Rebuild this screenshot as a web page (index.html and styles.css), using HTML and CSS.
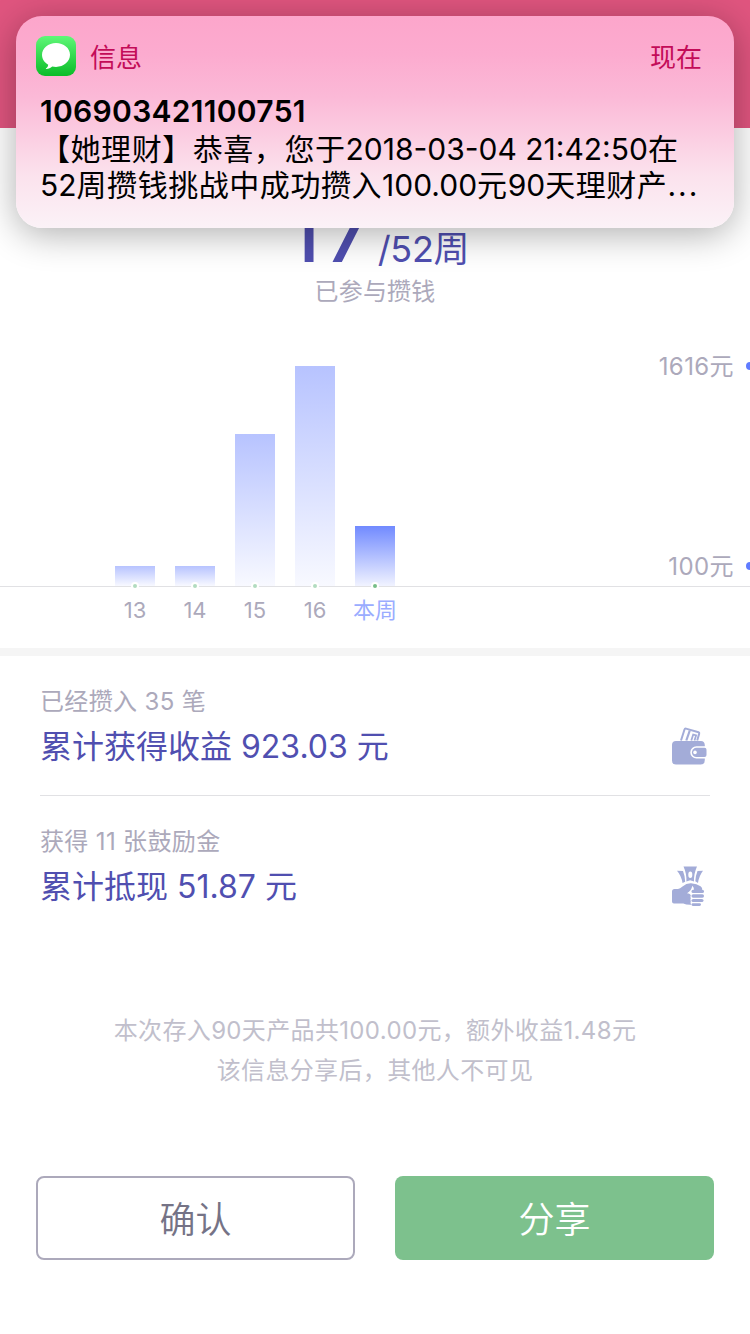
FILE: index.html
```
<!DOCTYPE html>
<html lang="zh-CN">
<head>
    <meta charset="UTF-8">
    <meta name="viewport" content="width=device-width, initial-scale=1.0">
    <title>52周攒钱挑战</title>
    <link rel="stylesheet" href="styles.css">
</head>
<body>
    <!-- 短信通知 -->
    <div class="notice">
        <div class="notice-head">
            <svg class="app-icon" viewBox="0 0 40 40">
                <defs>
                    <linearGradient id="msgGreen" x1="0" y1="0" x2="0" y2="1">
                        <stop offset="0" stop-color="#5ff777"/>
                        <stop offset="1" stop-color="#0abc28"/>
                    </linearGradient>
                </defs>
                <rect width="40" height="40" rx="9" fill="url(#msgGreen)"/>
                <path fill="#fff" d="M20 7C12.200 7 6 12.200 6 18.800c0 4.200 2.400 7.700 6.200 9.900-.2 1.700-1 3-2.300 3.800-.3.300-.1.500.3.500 2.400-.2 4.400-1.100 6-2.500 1.200.3 2.500.400 3.800.400 7.800 0 14-5.400 14-12.100S27.800 7 20 7z"/>
            </svg>
            <span class="app-name">信息</span>
            <span class="notice-time">现在</span>
        </div>
        <div class="notice-title">106903421100751</div>
        <div class="notice-text">【她理财】恭喜，您于<span class="num">2018-03-04 21:42:50</span>在<br><span class="num">52</span>周攒钱挑战中成功攒入<span class="num">100.00</span>元<span class="num">90</span>天理财产<span class="dots">...</span></div>
    </div>

    <div class="header"></div>

    <!-- 进度 -->
    <div class="progress">
        <div class="weeks"><b>17</b><span>/52周</span></div>
        <div class="caption">已参与攒钱</div>
    </div>

    <!-- 每周柱状图 -->
    <div class="chart">
        <div class="bars">
            <div class="bar" style="height: 20px"></div>
            <div class="bar" style="height: 20px"></div>
            <div class="bar" style="height: 152px"></div>
            <div class="bar" style="height: 220px"></div>
            <div class="bar current" style="height: 60px"></div>
        </div>
        <div class="scale">
            <div class="mark"><span>1616元</span></div>
            <div class="mark"><span>100元</span></div>
        </div>
    </div>
    <div class="labels">
        <span>13</span>
        <span>14</span>
        <span>15</span>
        <span>16</span>
        <span class="current">本周</span>
    </div>

    <!-- 统计 -->
    <div class="stats">
        <div class="stat">
            <div>
                <div class="stat-sub">已经攒入 35 笔</div>
                <div class="stat-main">累计获得收益 923.03 元</div>
            </div>
            <svg class="stat-icon" viewBox="0 0 40 40">
                <g fill="none" stroke="#a3acd8" stroke-width="2">
                    <path d="M11 14.500 14.500 3.500q.4-1.200 1.500-.9l12.500 3.600q1 .4.700 1.400L27.200 14.500"/>
                    <path stroke-width="2.200" d="M16.300 14.500 19.800 4.500"/>
                    <path stroke-width="1.800" d="M21.300 14.500l1.900-6 2.900.9-1.600 5.100"/>
                </g>
                <path fill="#a3acd8" d="M6 15h25q3.500 0 3.800 4v1.200h-8.300a6.200 6.200 0 0 0 0 12.400h8.300V34q0 4.500-4 4.500H6q-4 0-4-4V19q0-4 4-4z"/>
                <path fill="#a3acd8" d="M26.500 21.800h8q2 0 2 2v5.200q0 2-2 2h-8a4.600 4.600 0 0 1 0-9.200z"/>
                <circle cx="25" cy="26.400" r="1.800" fill="#fff"/>
            </svg>
        </div>
        <div class="stat">
            <div>
                <div class="stat-sub">获得 11 张鼓励金</div>
                <div class="stat-main">累计抵现 51.87 元</div>
            </div>
            <svg class="stat-icon" viewBox="0 0 40 40">
                <g fill="#a3acd8">
                    <path fill-rule="evenodd" d="M13.500.5h13.500q-3.200 7-3 15l-3.800-1.300-3.800 1.300Q16.700 7.500 13.500.5zM20.300 5.500a2 3.200 0 0 0 0 6.400 2 3.200 0 0 0 0-6.400z"/>
                    <path d="M7 4.800 13 5q2 5 2.200 10.800L12.500 17Q11.500 10 7 4.800zM33 4.800 27.500 5q-2 5-2.200 10.300L28 17Q29 10 33 4.800z"/>
                    <path d="M2 25.500q0-2.500 2.500-2.500H8q2-.2 4.500-2.500 4-3.500 8.500-3.300 6 .3 9.500 3 2.500 1.800 1.300 4.300H24q.2-3.200-1.700-4.700-.8 5-5.300 7.500 3.500.4 3.800 2.300-.8 1.200 0 2.600-.8 1.500 0 3-.8 1.500.5 3.500-5 .2-8-1.200H4q-2 0-2-2z"/>
                    <rect x="21.500" y="23.700" width="12.500" height="3.400" rx="1.600"/>
                    <rect x="21.500" y="28.300" width="12.500" height="3.400" rx="1.600"/>
                    <rect x="21.500" y="32.900" width="12" height="3.200" rx="1.600"/>
                    <rect x="21.500" y="37.200" width="9.500" height="2.800" rx="1.400"/>
                </g>
            </svg>
        </div>
    </div>

    <div class="note">
        本次存入90天产品共100.00元，额外收益1.48元<br>
        该信息分享后，其他人不可见
    </div>

    <div class="buttons">
        <button class="btn-confirm">确认</button>
        <button class="btn-share">分享</button>
    </div>
</body>
</html>
```
FILE: styles.css
```
*, *::after {
    box-sizing: border-box;
}

body {
    font-family: Inter, "Noto Sans CJK SC", sans-serif;
    font-weight: 380;
    background-color: #fff;
    margin: 0;
    height: 1334px;
    overflow: hidden;
    position: relative;
    color: #aca9bb;
}

/* 短信通知 */
.notice {
    position: absolute;
    z-index: 2;
    top: 16px;
    left: 16px;
    width: 718px;
    height: 212px;
    padding: 20px 20px 0;
    border-radius: 26px;
    background: linear-gradient(#fca6cb 0%, #fcabcf 18%, #fbb9d7 38%, #fbcee2 57%, #fbe2ed 75%, #fbf2f7 100%);
    box-shadow: 0 6px 36px rgba(0, 0, 0, 0.32);
    color: #000;
}

.notice-head {
    display: flex;
    align-items: center;
    height: 40px;
    font-size: 26px;
    color: #c30c58;
}

.notice-head span {
    padding-bottom: 2px;
}

.app-icon {
    width: 40px;
    height: 40px;
    margin-right: 14px;
}

.notice-time {
    margin-left: auto;
    margin-right: 12px;
}

.notice-title {
    margin: 16px 0 0 4px;
    font-size: 30px;
    line-height: 38px;
    font-weight: 600;
    letter-spacing: 0.3px;
}

.notice-text {
    margin: 1px 0 0 4px;
    font-size: 30px;
    line-height: 36px;
    letter-spacing: 0.55px;
    white-space: nowrap;
}

.num {
    letter-spacing: 0;
}

.dots {
    letter-spacing: 2px;
}

/* 顶部 */
.header {
    height: 128px;
    background-color: #e0557f;
}

/* 进度 */
.progress {
    height: 186px;
    padding-top: 57px;
    text-align: center;
}

.weeks {
    display: flex;
    justify-content: center;
    align-items: baseline;
    height: 89px;
    padding-left: 6px;
    line-height: 96px;
    color: #504fb0;
}

.weeks b {
    font-size: 80px;
    font-weight: 500;
    letter-spacing: 5px;
    margin-right: 2px;
}

.weeks span {
    font-size: 36px;
    letter-spacing: -0.3px;
}

.caption {
    font-size: 24px;
    line-height: 36px;
    letter-spacing: 0.2px;
}

/* 柱状图 */
.chart {
    display: flex;
    justify-content: space-between;
    height: 273px;
    padding-left: 115px;
    border-bottom: 1px solid #e1e1e4;
}

.bars {
    display: flex;
    align-items: flex-end;
    gap: 20px;
}

.bar {
    position: relative;
    width: 40px;
    background: linear-gradient(#b7c3ff, #f8f9ff);
}

.bar.current {
    background: linear-gradient(#718aff, #f1f3ff);
}

.bar::after {
    content: "";
    position: absolute;
    left: 16px;
    bottom: -4px;
    width: 8px;
    height: 8px;
    border: 2px solid #fff;
    border-radius: 50%;
    background-color: #b2dcc0;
}

.bar.current::after {
    background-color: #77be88;
}

.scale {
    display: flex;
    flex-direction: column;
    justify-content: space-between;
    height: 240px;
    margin-top: 32px;
    overflow: hidden;
}

.mark {
    display: flex;
    align-items: center;
    justify-content: flex-end;
    height: 40px;
    margin-right: -4px;
    font-size: 24px;
    letter-spacing: 0.4px;
}

.mark span {
    padding-bottom: 3px;
}

.mark::after {
    content: "";
    width: 8px;
    height: 8px;
    margin-left: 12px;
    border-radius: 50%;
    background-color: #607cff;
}

.labels {
    display: flex;
    height: 61px;
    padding: 5px 0 0 105px;
    font-size: 22px;
    line-height: 36px;
}

.labels span {
    width: 60px;
    text-align: center;
}

.labels .current {
    color: #9aacff;
}

/* 统计 */
.stats {
    border-top: 8px solid #f5f5f5;
    padding: 0 40px;
}

.stat {
    display: flex;
    justify-content: space-between;
    height: 140px;
    padding-top: 28px;
}

.stat:first-child {
    border-bottom: 1px solid #e1e1e4;
}

.stat-sub {
    font-size: 24px;
    line-height: 36px;
    letter-spacing: 0.35px;
}

.stat-main {
    font-size: 32px;
    line-height: 54px;
    color: #504fb0;
}

.stat-icon {
    width: 40px;
    height: 40px;
    margin-top: 42px;
}

.note {
    margin-top: 75px;
    font-size: 24px;
    line-height: 40px;
    letter-spacing: 0.35px;
    text-align: center;
    color: #c1bfcc;
}

/* 按钮 */
.buttons {
    display: flex;
    gap: 40px;
    margin-top: 85px;
    padding: 0 36px;
}

.buttons button {
    width: 319px;
    height: 84px;
    padding: 0 0 2px;
    border: none;
    border-radius: 8px;
    font-family: inherit;
    font-weight: 350;
    font-size: 36px;
}

.buttons .btn-confirm {
    border: 2px solid #aca9bb;
    background-color: #fff;
    color: #757386;
}

.buttons .btn-share {
    background-color: #7dc18d;
    color: #fff;
}
```
